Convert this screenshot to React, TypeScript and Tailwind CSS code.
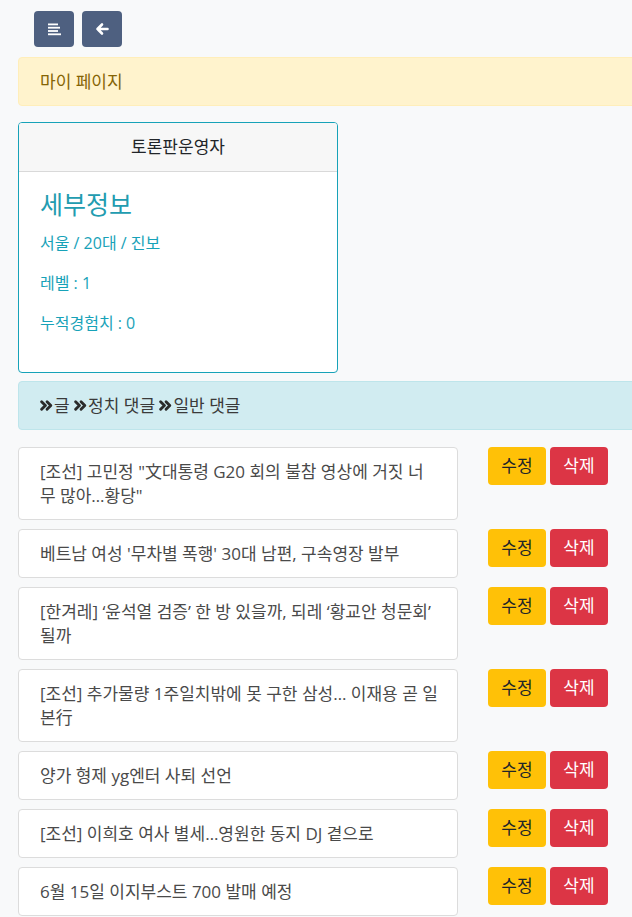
import React from "react";

const posts = [
  '[조선] 고민정 "文대통령 G20 회의 불참 영상에 거짓 너무 많아…황당"',
  "베트남 여성 '무차별 폭행' 30대 남편, 구속영장 발부",
  "[한겨레] ‘윤석열 검증’ 한 방 있을까, 되레 ‘황교안 청문회’ 될까",
  "[조선] 추가물량 1주일치밖에 못 구한 삼성… 이재용 곧 일본行",
  "양가 형제 yg엔터 사퇴 선언",
  "[조선] 이희호 여사 별세…영원한 동지 DJ 곁으로",
  "6월 15일 이지부스트 700 발매 예정",
];

function Chevrons() {
  return (
    <svg width="13" height="13" viewBox="0 0 12 12" className="inline-block mr-[1px] -mt-[3px]">
      <path d="M1.5 2.5 L5 6 L1.5 9.5" fill="none" stroke="#2b2b2b" strokeWidth="2.6" strokeLinecap="round" strokeLinejoin="round" />
      <path d="M6.5 2.5 L10 6 L6.5 9.5" fill="none" stroke="#2b2b2b" strokeWidth="2.6" strokeLinecap="round" strokeLinejoin="round" />
    </svg>
  );
}

export default function App() {
  return (
    <div
      className="min-h-[917px] w-[632px] overflow-hidden bg-[#f8f9fa] text-[17px]"
      style={{ fontFamily: '"Open Sans", "Noto Sans CJK KR", sans-serif' }}
    >
      <div className="flex gap-2 pl-[34px] pt-[11px]">
        <button className="flex h-9 w-10 items-center justify-center rounded bg-[#4e6080]">
          <svg width="14" height="14" viewBox="0 0 14 14">
            <rect x="1" y="1.5" width="10" height="1.8" fill="#fff" />
            <rect x="1" y="4.8" width="12" height="1.8" fill="#fff" />
            <rect x="1" y="8.1" width="10" height="1.8" fill="#fff" />
            <rect x="1" y="11.4" width="13" height="1.8" fill="#fff" />
          </svg>
        </button>
        <button className="flex h-9 w-10 items-center justify-center rounded bg-[#4e6080]">
          <svg width="14" height="14" viewBox="0 0 14 14">
            <path d="M12.5 7 H2.5 M7 2.5 L2.5 7 L7 11.5" fill="none" stroke="#fff" strokeWidth="2.6" strokeLinecap="round" strokeLinejoin="round" />
          </svg>
        </button>
      </div>

      <div className="ml-[18px] mt-[10px] w-[640px] rounded border border-[#ffeeba] bg-[#fff3cd] px-[21px] py-[11.5px] leading-6 text-[#856404]">
        마이 페이지
      </div>

      <div className="ml-[18px] mt-[16px] w-[320px] overflow-hidden rounded border border-[#17a2b8] bg-white">
        <div className="h-[49px] border-b border-[#d9d9d9] bg-[#f7f7f7] text-center leading-[48px] text-[#212529]">
          토론판운영자
        </div>
        <div className="px-[21px] pt-[14px] pb-[37px] text-[#17a2b8]">
          <div className="text-[25px] leading-[36px] text-[#229cb0]">세부정보</div>
          <div className="mt-[9px] text-[16px] leading-6">서울 / 20대 / 진보</div>
          <div className="mt-4 text-[16px] leading-6">레벨 : 1</div>
          <div className="mt-4 text-[16px] leading-6">누적경험치 : 0</div>
        </div>
      </div>

      <div className="ml-[18px] mt-[8px] w-[640px] rounded border border-[#bee5eb] bg-[#d1ecf1] px-[21px] py-[11.5px] leading-6 text-[#3a3a3a]">
        <Chevrons />글 <Chevrons />정치 댓글 <Chevrons />일반 댓글
      </div>

      <ul className="ml-[18px] mt-[17px] flex flex-col gap-[9px]">
        {posts.map((p) => (
          <li key={p} className="flex items-start">
            <div className="w-[440px] rounded border border-[#dcdcdc] bg-white py-[11.5px] pl-[21px] pr-[18px] leading-6 text-[#4a4a4a]">
              {p}
            </div>
            <div className="ml-[30px] flex gap-1">
              <button className="h-[38px] w-[58px] rounded bg-[#ffc107] text-[#212529]">수정</button>
              <button className="h-[38px] w-[58px] rounded bg-[#dc3545] text-white">삭제</button>
            </div>
          </li>
        ))}
      </ul>
    </div>
  );
}
